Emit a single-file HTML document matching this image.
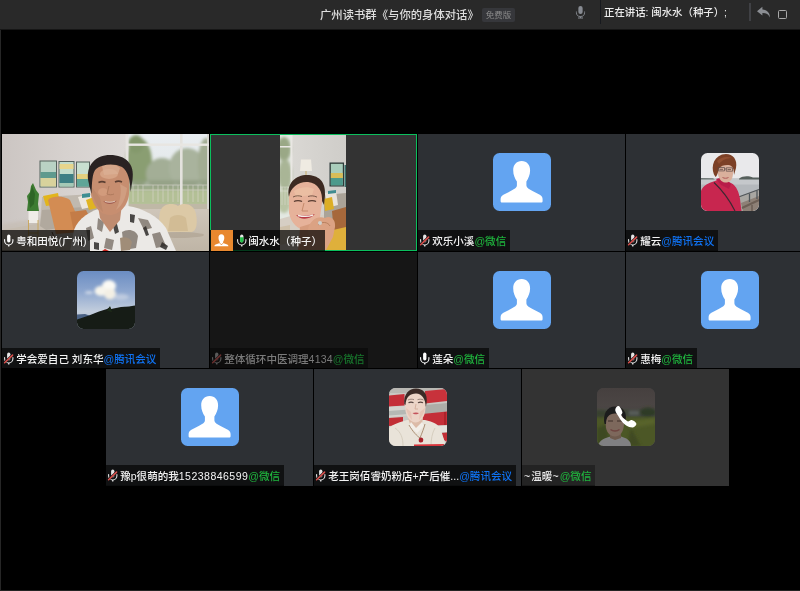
<!DOCTYPE html>
<html lang="zh-CN">
<head>
<meta charset="utf-8">
<title>腾讯会议</title>
<style>
*{box-sizing:border-box;margin:0;padding:0}
html,body{width:800px;height:591px;overflow:hidden;background:#000}
body{position:relative;font-family:"Liberation Sans","Noto Sans CJK SC",sans-serif;color:#fff}
#win{position:absolute;left:0;top:0;width:800px;height:591px;background:#000;overflow:hidden}
#hdr{position:absolute;left:0;top:0;width:800px;height:30px;background:#292929;border-bottom:1px solid #161616}
#lb{position:absolute;left:0;top:30px;width:1px;height:561px;background:#262626}
#bb{position:absolute;left:0;top:590px;width:800px;height:1px;background:#232323}
.title{position:absolute;left:320px;top:5.8px;height:18px;line-height:18px;font-size:11.35px;font-weight:500;color:#dedede;white-space:nowrap;will-change:transform}
.badge{position:absolute;left:482px;top:8px;width:33px;height:14px;line-height:14px;background:#36373b;color:#8c8c8c;font-size:8.5px;text-align:center;border-radius:2px;white-space:nowrap;will-change:transform}
.sep1{position:absolute;left:600px;top:0;width:1px;height:24px;background:#17191e}
.sep2{position:absolute;left:749px;top:3px;width:2px;height:18px;background:#404145}
.speak{position:absolute;left:604px;top:4.2px;height:18px;line-height:18px;font-size:10.4px;font-weight:500;color:#ececec;white-space:nowrap;will-change:transform}
.hmic{position:absolute;left:574.2px;top:5.2px}
.reply{position:absolute;left:756px;top:6px}
.maxb{position:absolute;left:778px;top:10px;width:9px;height:9px;border:1.2px solid #a9a9a9;border-radius:1.5px}
.tile{position:absolute;width:207px;height:117px;background:#2d3034;overflow:hidden}
.av{position:absolute;left:75px;top:19px;width:58px;height:58px;border-radius:6.5px;overflow:hidden;background:#63a4f1}
.av svg{display:block}
.lab{position:absolute;left:0;top:96px;height:21px;border-bottom:1px solid rgba(0,0,0,.25);line-height:20px;background:rgba(0,0,0,.64);font-size:10.55px;font-weight:500;white-space:nowrap;color:#f4f4f4;padding:1.2px 3.5px 0 14.2px;will-change:transform}
.lab .mic{position:absolute;left:0;top:3.7px}
.wx{color:#1fb63d}
.dg{letter-spacing:.45px}
.td{letter-spacing:1.1px}
.av.ph{background:#2d3034}
.tm{color:#0f72f2}
.photo{position:absolute;left:0;top:0;display:block}
#t11 .lab{background:rgba(0,0,0,.72)}
#t12{background:#333}
#t12 .bd{position:absolute;left:0;top:0;width:207px;height:117px;border:1px solid #0bbf5d}
#t12 .photo{left:70px;top:1px}
#t12 .lab{left:23px;top:96px;padding-left:15.2px;padding-right:3.4px;border-bottom:none;background:rgba(0,0,0,.7)}
#t12 .lab .mic{left:1.6px}
#t12 .host{position:absolute;left:0;top:96px;width:23px;height:21px;background:#e8882f;border-left:1px solid #0c1a10}
#t12 .host svg{display:block;margin-left:-1px}
#t22{background:#161616}
#t22 .lab{background:rgba(0,0,0,.4);color:#7a7a7a}
#t22 .wx{color:#17762c}
#t33{background:#333}
#t33 .lab{padding-left:2px;background:rgba(0,0,0,.3);color:#ececec}
#t33 .av{background:#444}
</style>
</head>
<body>
<div id="win">
  <div id="hdr">
    <div class="title">广州读书群《与你的身体对话》</div>
    <div class="badge">免费版</div>
    <svg class="hmic" width="13" height="14.9" viewBox="0 0 14 16"><rect x="4.7" y="1" width="4.6" height="8.8" rx="2.3" fill="#878b92"/><path d="M2.6 7v1a4.4 4.4 0 0 0 8.8 0v-1" fill="none" stroke="#878b92" stroke-width="1"/><path d="M7 12.4v1.4M4.3 13.9h5.4" stroke="#878b92" stroke-width="1.1" fill="none"/></svg>
    <div class="sep1"></div>
    <div class="speak">正在讲话: 闽水水（种子）;</div>
    <div class="sep2"></div>
    <svg class="reply" width="16" height="13" viewBox="0 0 16 13"><path fill="#8b8e93" d="M6.4 0.8L1 5.2L6.4 9.6V6.9C10.2 6.8 12.6 8.2 13.9 11.6C14.1 7.2 11.4 3.9 6.4 3.5Z"/></svg>
    <div class="maxb"></div>
  </div>
  <div id="lb"></div><div id="bb"></div>

  <!-- row 1 -->
  <div class="tile" id="t11" style="left:2px;top:134px"><svg class="photo" width="207" height="117" viewBox="0 0 207 117">
<defs>
<filter id="b1" x="-10%" y="-10%" width="120%" height="120%"><feGaussianBlur stdDeviation="0.7"/></filter>
<filter id="b2" x="-20%" y="-20%" width="140%" height="140%"><feGaussianBlur stdDeviation="1.8"/></filter>
<filter id="b3" x="-20%" y="-20%" width="140%" height="140%"><feGaussianBlur stdDeviation="3.5"/></filter>
<linearGradient id="wall1" x1="0" y1="0" x2="1" y2="0"><stop offset="0" stop-color="#cbc5c2"/><stop offset=".3" stop-color="#d6d1ce"/><stop offset=".6" stop-color="#dedad8"/><stop offset="1" stop-color="#e4e1df"/></linearGradient>
<linearGradient id="flr1" x1="0" y1="0" x2="0" y2="1"><stop offset="0" stop-color="#cfc6ba"/><stop offset="1" stop-color="#bfb5a6"/></linearGradient>
<linearGradient id="sky1" x1="0" y1="0" x2="0" y2="1"><stop offset="0" stop-color="#e9edf1"/><stop offset="1" stop-color="#dfe5e2"/></linearGradient>
</defs>
<rect width="207" height="117" fill="url(#wall1)"/>
<!-- floor -->
<path d="M0 96L124 74L207 74L207 117L0 117Z" fill="url(#flr1)"/>
<path d="M0 90L40 84L124 76L124 96L0 112Z" fill="#c4bbb0" opacity=".6" filter="url(#b2)"/>
<!-- window view -->
<rect x="125" y="0" width="82" height="75" fill="url(#sky1)"/>
<g filter="url(#b2)">
<ellipse cx="137" cy="28" rx="13" ry="24" fill="#8a9e72"/>
<ellipse cx="160" cy="40" rx="16" ry="16" fill="#a3ae96"/>
<ellipse cx="185" cy="34" rx="18" ry="20" fill="#a9b39d"/>
<ellipse cx="204" cy="30" rx="8" ry="26" fill="#a2ac93"/>
<ellipse cx="134" cy="10" rx="8" ry="9" fill="#84986c"/>
<rect x="125" y="52" width="82" height="20" fill="#b3c096"/>
<rect x="125" y="46" width="82" height="10" fill="#8f9c80" opacity=".7"/>
</g>
<g stroke="#ddd9d2" stroke-width=".7" opacity=".8"><path d="M128 51H207M128 56H207"/><path d="M131 51V68M136 51V68M141 51V68M151 51V68M156 51V68M161 51V68M166 51V68M171 51V68M176 51V68M186 51V68M191 51V68M196 51V68M201 51V68"/></g>
<rect x="125" y="70" width="82" height="5" fill="#bfb8a6"/>
<!-- window frames -->
<rect x="123.500" y="0" width="3" height="75" fill="#e6e3e0"/>
<rect x="178" y="0" width="2.600" height="72" fill="#e4e2de"/>
<rect x="205" y="0" width="2" height="75" fill="#d9d7d2"/>
<rect x="125" y="9.500" width="82" height="2.400" fill="#e8e6e2"/>
<!-- paintings -->
<g filter="url(#b1)">
<rect x="37.500" y="26.500" width="17.500" height="27" fill="#55625d"/>
<rect x="38.500" y="27.500" width="15.500" height="25" fill="#b9d2c4"/>
<rect x="38.500" y="38" width="15.500" height="6" fill="#5f9a8e"/>
<rect x="38.500" y="44" width="15.500" height="8.500" fill="#d8d29c"/>
<rect x="56.500" y="27" width="16" height="26.500" fill="#55625d"/>
<rect x="57.500" y="28" width="14" height="24.500" fill="#c2dccb"/>
<rect x="57.500" y="30" width="14" height="5" fill="#e6d58c"/>
<rect x="57.500" y="40" width="14" height="9" fill="#3d7f84"/>
<rect x="57.500" y="49" width="14" height="3.500" fill="#a5c9b6"/>
<rect x="74" y="27.500" width="14" height="26" fill="#55625d"/>
<rect x="75" y="28.500" width="12" height="24" fill="#c8dfd0"/>
<rect x="75" y="40" width="12" height="5" fill="#e3d07e"/>
<rect x="75" y="45" width="12" height="7.500" fill="#5fa597"/>
</g>
<!-- sofa -->
<g filter="url(#b1)">
<path d="M40 63L92 60L96 64L96 88L44 96L38 92Z" fill="#c0b9af"/>
<path d="M40 76L96 72L96 88L44 96L38 92Z" fill="#b1a99e"/>
<path d="M41 62L56 59L58 70L44 72Z" fill="#e2b51f"/>
<path d="M76 63L88 60L94 72L80 75Z" fill="#ece7de"/>
<path d="M84 66L92 63L95 74L87 76Z" fill="#e0b422"/>
<path d="M80 60L88 59L88 63L80 64Z" fill="#3d8e92"/>
<!-- orange chair -->
<path d="M46 66C52 61 62 62 68 66L76 84L78 98L54 100Z" fill="#d38c52"/>
<path d="M68 78L84 76L88 84L86 98L72 99Z" fill="#c47c46"/>
<path d="M50 98L54 108M80 96L82 104" stroke="#6b4a30" stroke-width="1"/>
</g>
<!-- plant -->
<g filter="url(#b1)">
<path d="M31 49L34 56L37 60L36 70L37 77L25 77L26 68L25 62L28 58L29 52Z" fill="#3e7b32"/>
<path d="M30 52L33 60L32 70L28 74L27 64Z" fill="#2d6526"/>
<rect x="26.500" y="77" width="9.500" height="12" fill="#efece8"/>
<path d="M26.500 86V104M36 86V104M26.500 99H36" stroke="#c9a556" stroke-width=".9" fill="none"/>
</g>
<!-- beanbag -->
<g filter="url(#b1)">
<path d="M158 78C160 70 170 68 176 72C182 68 192 70 194 80C196 90 194 97 190 98L162 98C157 96 156 86 158 78Z" fill="#dcc9a6"/>
<path d="M168 84C172 80 180 80 184 84L186 97L166 97Z" fill="#cdb68f" opacity=".7"/>
<ellipse cx="178" cy="101" rx="24" ry="3" fill="#a89c8a" opacity=".5"/>
</g>
<!-- person -->
<g filter="url(#b1)">
<!-- shirt -->
<path d="M68 117L72 96C76 84 90 76 100 74L126 72C140 74 156 82 164 94L174 117Z" fill="#ebe9e6"/>
<path d="M96 84l6 4-2 10-5-3zM84 94l5-2 3 12-6 3zM120 98c6-4 14-2 16 4l-2 12-12 2zM136 84l10 2 4 8-8 2zM150 100l8-2 6 14-10 2zM104 104l8 2-2 10-8-2zM76 104l4-3 2 9-5 2z" fill="#7a7068" opacity=".8"/>
<path d="M110 88l4-2 3 12-4 2zM128 80l5 1-1 8-4-1zM144 92l3 9-3 1-3-8zM92 108l5 1v7l-5-1zM160 108l6 4-2 4-6-3z" fill="#2e2a28" opacity=".85"/>
<path d="M118 104c5-2 10 0 12 4l-2 8-9 1z" fill="#a08d78"/>
<!-- neck -->
<path d="M96 72L120 70L118 86L108 98L98 84Z" fill="#c08c70"/>
<!-- face -->
<path d="M89 40C89 28 99 24 108 24C118 24 127 30 127.500 42L127 60C126 72 117 81 108 81C98 81 90.500 72 89 60Z" fill="#c78e70"/><ellipse cx="107" cy="40" rx="9" ry="5" fill="#e0b394" opacity=".6"/><ellipse cx="101" cy="58" rx="5" ry="4" fill="#d8a384" opacity=".6"/><path d="M89 52c1 10 5 20 12 26l-3-14z" fill="#b88468" opacity=".6"/><path d="M118 50c2 8 0 18-4 26 6-4 10-12 11-22z" fill="#d6a88c" opacity=".6"/>
<path d="M100 32c6-3 14-2 18 2l-2 6-14 1z" fill="#dcb096" opacity=".7"/>
<!-- hair -->
<path d="M86.500 48C83 31 94 21 108 21C124 21 133 30 130.500 46L128.500 58C128.500 47 126 37 120 33C112 29 100 30 94 35C90 39 90 49 89.500 60Z" fill="#2a2422"/>
<!-- features -->
<path d="M96.500 48.500c2-1 5-1 7 0M113 48c2-1 5-1 7 0" stroke="#3e2a22" stroke-width="1.500" fill="none" opacity=".8"/>
<path d="M101 67c4 2 10 2 14-.5-3 4-10 5-14 .5z" fill="#9a544a" opacity=".85"/><path d="M103 67.500c3 1 7 1 10-.3" stroke="#e8dcd4" stroke-width=".9" fill="none" opacity=".8"/>
<path d="M107 52l-2 8c2 1 5 1 7 0" stroke="#a87458" stroke-width="1" fill="none" opacity=".8"/>
<path d="M100 117l3-2 4 2z" fill="#c8231e"/>
</g>
</svg><div class="lab"><svg class="mic" width="13" height="14" viewBox="0 0 13 14"><rect x="5.1" y="0.6" width="3.3" height="7.8" rx="1.65" fill="#ffffff"/><path d="M2.6 5.6v1.2a4.15 4.15 0 0 0 8.3 0v-1.2" fill="none" stroke="#ffffff" stroke-width="1.1" stroke-linecap="round"/><path d="M6.75 10.9v1.5" stroke="#ffffff" stroke-width="1.3"/></svg>粤和田悦(广州)</div></div>
  <div class="tile" id="t12" style="left:210px;top:134px"><svg class="photo" width="66" height="115" viewBox="0 0 66 115">
<defs>
<filter id="c1" x="-10%" y="-10%" width="120%" height="120%"><feGaussianBlur stdDeviation="0.7"/></filter>
<filter id="c2" x="-20%" y="-20%" width="140%" height="140%"><feGaussianBlur stdDeviation="1.6"/></filter>
<linearGradient id="wall2" x1="0" y1="0" x2="1" y2="0"><stop offset="0" stop-color="#dcdad6"/><stop offset="1" stop-color="#cfcdc9"/></linearGradient>
</defs>
<rect width="66" height="115" fill="url(#wall2)"/>
<!-- window left -->
<rect x="0" y="0" width="12" height="84" fill="#e3e8e2"/>
<g filter="url(#c2)">
<ellipse cx="4" cy="14" rx="7" ry="12" fill="#9aa886"/>
<ellipse cx="5" cy="40" rx="7" ry="16" fill="#a9b596"/>
<ellipse cx="4" cy="66" rx="7" ry="12" fill="#b9c4a4"/>
</g>
<rect x="10.500" y="0" width="2" height="86" fill="#e9e7e3"/>
<rect x="0" y="11" width="11" height="1.500" fill="#e9e7e3"/>
<path d="M0 52H10M0 56H10M2 52V70M5 52V70M8 52V70" stroke="#e2e0d8" stroke-width=".6" opacity=".8"/>
<!-- floor -->
<path d="M0 84L14 80L66 80L66 115L0 115Z" fill="#d6cec4"/>
<path d="M0 92L10 90L10 108L0 110Z" fill="#c9b79a" opacity=".6" filter="url(#c1)"/>
<!-- lamp -->
<g filter="url(#c1)">
<path d="M21 24.500L31 24.500L32 36L20 36Z" fill="#efebe2"/>
<path d="M26 36V46" stroke="#c9ab62" stroke-width="1"/>
</g>
<!-- painting -->
<g filter="url(#c1)">
<rect x="49.500" y="27.500" width="14.500" height="24" fill="#2f3a38"/>
<rect x="50.800" y="28.800" width="12" height="21.500" fill="#a9cdbb"/>
<rect x="50.800" y="38" width="12" height="5" fill="#d8bd58"/>
<rect x="50.800" y="43" width="12" height="7.300" fill="#4e9a8c"/>
<rect x="64.500" y="30" width="1.500" height="22" fill="#39706c"/>
</g>
<!-- sofa right -->
<g filter="url(#c1)">
<path d="M44 60L66 58L66 84L44 86Z" fill="#aaa398"/>
<path d="M45 58L56 56L58 70L47 73Z" fill="#e8e3da"/>
<path d="M44 64L52 62L54 74L45 76Z" fill="#dcae25"/>
<path d="M48 56L56 55L56 58L48 59Z" fill="#3f8c90"/>
<path d="M52 76L66 72L66 100L54 100Z" fill="#a6673a"/>
</g>
<!-- person -->
<g filter="url(#c1)">
<path d="M40 98L66 92L66 115L36 115Z" fill="#dfb03a"/>
<!-- hair -->
<path d="M9 62C6 48 16 40 27 40C38 40 46 46 45 60L44 70L40 62C36 52 22 50 14 56Z" fill="#3e2c22"/>
<!-- face -->
<path d="M9 62C10 52 20 46 28 47C38 48 43 56 42 68L40 82C38 90 32 95 26 95C18 95 11 88 9 78Z" fill="#e6b29a"/>
<path d="M14 56c5-4 14-5 20-2l-2 6-16 2z" fill="#ecc0a4" opacity=".8"/>
<path d="M14 66.500c2-1.200 6-1.200 8 0M28 66.500c2-1.200 6-1.200 8 0" stroke="#3e261e" stroke-width="1.400" fill="none" opacity=".85"/><path d="M13 62c3-1.500 6-1.500 9-.5M28 61.500c3-1 6-.8 9 .6" stroke="#4a3226" stroke-width="1" fill="none" opacity=".7"/>
<path d="M16 80c4 5 14 5 19-1-5 1.500-13 2-19 1z" fill="#b83a44"/>
<path d="M18 80.500c5 1.200 11 1 15-.4" stroke="#f4eeea" stroke-width="1.300" fill="none"/>
<path d="M24 68l-2 8h6" stroke="#c58a6c" stroke-width="1" fill="none"/>
<!-- neck -->
<path d="M20 92L40 86L44 115L18 115Z" fill="#d69c7e"/>
<!-- hand -->
<path d="M28 94C30 85 38 80 45 83C50 80 56 84 55 92L53 102L46 115L30 115Z" fill="#dba283"/>
<path d="M38 90c4-4 10-3 12 1" stroke="#b8805f" stroke-width="1" fill="none"/>
<circle cx="40" cy="88" r="2" fill="#cfd0cc"/>
</g>
</svg><div class="bd"></div><div class="host"><svg width="23" height="21" viewBox="0 0 23 21"><path fill="#fff" d="M11.4 4.2c1.9 0 2.9 1.5 2.9 3.5 0 1.7-.6 3-1.2 4v1.3l4 1.4c.9.3 1.3.9 1.3 1.8H4.4c0-.9.4-1.5 1.3-1.8l4-1.4v-1.3c-.6-1-1.2-2.3-1.2-4 0-2 1-3.5 2.9-3.5z"/><path d="M9.8 13.2l1.6 1.6 1.6-1.6" fill="none" stroke="#e8882f" stroke-width=".9"/></svg></div><div class="lab"><svg class="mic" width="13" height="14" viewBox="0 0 13 14"><rect x="5.1" y="0.6" width="3.3" height="7.8" rx="1.65" fill="#e8e8e8"/><path d="M5.1 3.2h3.3v3.55a1.65 1.65 0 0 1-3.3 0z" fill="#22c24a"/><path d="M2.6 5.6v1.2a4.15 4.15 0 0 0 8.3 0v-1.2" fill="none" stroke="#e8e8e8" stroke-width="1.1" stroke-linecap="round"/><path d="M6.75 10.9v1.5" stroke="#e8e8e8" stroke-width="1.3"/></svg>闽水水（种子）</div></div>
  <div class="tile" id="t13" style="left:418px;top:134px"><div class="av"><svg width="58" height="58" viewBox="0 0 58 58"><path fill="#fff" d="M28.7 8C34 8 37.1 12 37.1 17.2C37.1 22 35.2 25.6 33.4 28.6L33.4 32.6C33.4 34.8 36 36.3 40 38.3L46.8 41.8C48.9 42.9 49.6 44.4 49.6 46.4L49.6 48C49.6 49 49.1 49.5 48.1 49.5L9.1 49.5C8.1 49.5 7.6 49 7.6 48L7.6 46.4C7.6 44.4 8.3 42.9 10.4 41.8L17.2 38.3C21.2 36.3 23.9 34.8 23.9 32.6L23.9 28.6C22 25.6 20.2 22 20.2 17.2C20.2 12 23.3 8 28.7 8Z"/></svg></div><div class="lab"><svg class="mic" width="13" height="14" viewBox="0 0 13 14"><rect x="5.1" y="0.6" width="3.3" height="7.8" rx="1.65" fill="#e4e4e4"/><path d="M2.6 5.6v1.2a4.15 4.15 0 0 0 8.3 0v-1.2" fill="none" stroke="#e4e4e4" stroke-width="1.1" stroke-linecap="round"/><path d="M6.75 10.9v1.5" stroke="#e4e4e4" stroke-width="1.3"/><path d="M2.6 10.7L10.7 2.9" stroke="#111" stroke-width="2.3" stroke-linecap="butt"/><path d="M2.6 10.8L10.6 3.1" stroke="#dd514e" stroke-width="1.5" stroke-linecap="round"/></svg>欢乐小溪<span class="wx">@微信</span></div></div>
  <div class="tile" id="t14" style="left:626px;top:134px"><div class="av ph"><svg width="58" height="58" viewBox="0 0 58 58">
<defs><filter id="d1" x="-10%" y="-10%" width="120%" height="120%"><feGaussianBlur stdDeviation="0.6"/></filter></defs>
<rect width="58" height="58" fill="#e9e9eb"/>
<rect y="25.500" width="58" height="33" fill="#b4b8bc"/>
<rect y="25.500" width="58" height="6" fill="#c5c8cb"/>
<g filter="url(#d1)">
<path d="M38 25.800C42 22.500 48 23 52 24.600L58 24.400L58 26.400L38 26.400Z" fill="#56605c"/>
<path d="M0 25L12 25.200L14 26.400L0 26.400Z" fill="#6d7674"/>
<!-- boardwalk / railing -->
<path d="M36 44L58 36L58 58L40 58Z" fill="#a9a7a2"/>
<path d="M40 50L58 43L58 58L42 58Z" fill="#8d8076"/>
<path d="M37.500 44L58 36.500" stroke="#50565a" stroke-width="1.100"/>
<path d="M48.500 40.500V49M56 37.500V46" stroke="#50565a" stroke-width="1.300"/>
<path d="M41 55L58 47" stroke="#6d5f55" stroke-width="2"/>
<path d="M51 52V58" stroke="#6d5f55" stroke-width="1.600"/>
<!-- jacket -->
<path d="M0 38C2 32 8 30 14 28L20 25L30 30C36 33 38 40 39 46L40.500 58L0 58Z" fill="#c8254f"/>
<path d="M15 26L22 24L30 31L28 36L20 32Z" fill="#b81f48"/>
<path d="M13 29.500C20 36 28 46 34 58" stroke="#3a2a30" stroke-width="1.100" fill="none"/>
<!-- face -->
<path d="M16.500 16C16.500 11 21 9 25 9.500C30 10 32.500 13 32.500 18L31.500 24C30.500 28 27 30 24 29.500C20 29 17.500 25 17 21Z" fill="#dab09c"/>
<!-- hair -->
<path d="M14.500 24C9.500 17 11 5 21 1.500C30 -1 37 5 35 15L33 22C33 16 32 13 28 12C24 11.500 20 12.500 18 15.500C17 18 17 22 14.500 24Z" fill="#7c4126"/><path d="M16 8c4-4 10-5 15-3-5 0-10 2-13 6z" fill="#9a5634" opacity=".7"/>
<path d="M17.300 14.500h6.200v3.400h-6.200zM25.300 14.800h6.200v3.400h-6.200zM23.500 16h1.800" stroke="#5a4a48" stroke-width=".7" fill="none"/><path d="M18.500 16.300h3.500M26.500 16.600h3.500" stroke="#4a3a36" stroke-width=".9" opacity=".8"/>
<path d="M21.500 24.500c2 1 4 1 6 0" stroke="#b05a58" stroke-width="1" fill="none"/>
</g>
</svg></div><div class="lab"><svg class="mic" width="13" height="14" viewBox="0 0 13 14"><rect x="5.1" y="0.6" width="3.3" height="7.8" rx="1.65" fill="#e4e4e4"/><path d="M2.6 5.6v1.2a4.15 4.15 0 0 0 8.3 0v-1.2" fill="none" stroke="#e4e4e4" stroke-width="1.1" stroke-linecap="round"/><path d="M6.75 10.9v1.5" stroke="#e4e4e4" stroke-width="1.3"/><path d="M2.6 10.7L10.7 2.9" stroke="#111" stroke-width="2.3" stroke-linecap="butt"/><path d="M2.6 10.8L10.6 3.1" stroke="#dd514e" stroke-width="1.5" stroke-linecap="round"/></svg>耀云<span class="tm">@腾讯会议</span></div></div>
  <!-- row 2 -->
  <div class="tile" id="t21" style="left:2px;top:252px;height:116px"><div class="av ph"><svg width="58" height="58" viewBox="0 0 58 58">
<defs><filter id="e1" x="-20%" y="-20%" width="140%" height="140%"><feGaussianBlur stdDeviation="1.400"/></filter>
<filter id="e2" x="-10%" y="-10%" width="120%" height="120%"><feGaussianBlur stdDeviation="0.600"/></filter>
<linearGradient id="sky2" x1="0" y1="0" x2="0" y2="1"><stop offset="0" stop-color="#6b8dc2"/><stop offset=".35" stop-color="#8ea7cf"/><stop offset=".7" stop-color="#c3cedd"/><stop offset="1" stop-color="#aab6c8"/></linearGradient></defs>
<rect width="58" height="58" fill="url(#sky2)"/>
<g filter="url(#e1)">
<ellipse cx="32" cy="15" rx="7" ry="6" fill="#fbfaf5"/>
<ellipse cx="24" cy="20" rx="6.500" ry="5" fill="#f6f4ec"/>
<ellipse cx="33" cy="23" rx="6" ry="5.500" fill="#f3efe4"/>
<ellipse cx="12" cy="21.500" rx="4" ry="1.500" fill="#dfe5ee" opacity=".8"/>
<ellipse cx="44" cy="26" rx="8" ry="3" fill="#d4dbe8" opacity=".6"/>
</g>
<g filter="url(#e2)">
<path d="M0 43.500L8 43L14 45L0 49Z" fill="#4c6285"/>
<path d="M0 48.500L12 44.500L22 40.500L30 38L33 36L34 38L44 36L52 35.500L58 34.500L58 58L0 58Z" fill="#141a16"/>
<path d="M30 40l3-5 2 6z" fill="#1f2b1a"/>
</g>
</svg></div><div class="lab"><svg class="mic" width="13" height="14" viewBox="0 0 13 14"><rect x="5.1" y="0.6" width="3.3" height="7.8" rx="1.65" fill="#e4e4e4"/><path d="M2.6 5.6v1.2a4.15 4.15 0 0 0 8.3 0v-1.2" fill="none" stroke="#e4e4e4" stroke-width="1.1" stroke-linecap="round"/><path d="M6.75 10.9v1.5" stroke="#e4e4e4" stroke-width="1.3"/><path d="M2.6 10.7L10.7 2.9" stroke="#111" stroke-width="2.3" stroke-linecap="butt"/><path d="M2.6 10.8L10.6 3.1" stroke="#dd514e" stroke-width="1.5" stroke-linecap="round"/></svg>学会爱自己 刘东华<span class="tm">@腾讯会议</span></div></div>
  <div class="tile" id="t22" style="left:210px;top:252px;height:116px"><div class="lab"><svg class="mic" width="13" height="14" viewBox="0 0 13 14"><rect x="5.1" y="0.6" width="3.3" height="7.8" rx="1.65" fill="#5a5a5a"/><path d="M2.6 5.6v1.2a4.15 4.15 0 0 0 8.3 0v-1.2" fill="none" stroke="#5a5a5a" stroke-width="1.1" stroke-linecap="round"/><path d="M6.75 10.9v1.5" stroke="#5a5a5a" stroke-width="1.3"/><path d="M2.6 10.7L10.7 2.9" stroke="#111" stroke-width="2.3" stroke-linecap="butt"/><path d="M2.6 10.8L10.6 3.1" stroke="#6a2f2e" stroke-width="1.5" stroke-linecap="round"/></svg>整体循环中医调理<span class="dg" style="letter-spacing:.2px">4134</span><span class="wx">@微信</span></div></div>
  <div class="tile" id="t23" style="left:418px;top:252px;height:116px"><div class="av"><svg width="58" height="58" viewBox="0 0 58 58"><path fill="#fff" d="M28.7 8C34 8 37.1 12 37.1 17.2C37.1 22 35.2 25.6 33.4 28.6L33.4 32.6C33.4 34.8 36 36.3 40 38.3L46.8 41.8C48.9 42.9 49.6 44.4 49.6 46.4L49.6 48C49.6 49 49.1 49.5 48.1 49.5L9.1 49.5C8.1 49.5 7.6 49 7.6 48L7.6 46.4C7.6 44.4 8.3 42.9 10.4 41.8L17.2 38.3C21.2 36.3 23.9 34.8 23.9 32.6L23.9 28.6C22 25.6 20.2 22 20.2 17.2C20.2 12 23.3 8 28.7 8Z"/></svg></div><div class="lab"><svg class="mic" width="13" height="14" viewBox="0 0 13 14"><rect x="5.1" y="0.6" width="3.3" height="7.8" rx="1.65" fill="#ffffff"/><path d="M2.6 5.6v1.2a4.15 4.15 0 0 0 8.3 0v-1.2" fill="none" stroke="#ffffff" stroke-width="1.1" stroke-linecap="round"/><path d="M6.75 10.9v1.5" stroke="#ffffff" stroke-width="1.3"/></svg>莲朵<span class="wx">@微信</span></div></div>
  <div class="tile" id="t24" style="left:626px;top:252px;height:116px"><div class="av"><svg width="58" height="58" viewBox="0 0 58 58"><path fill="#fff" d="M28.7 8C34 8 37.1 12 37.1 17.2C37.1 22 35.2 25.6 33.4 28.6L33.4 32.6C33.4 34.8 36 36.3 40 38.3L46.8 41.8C48.9 42.9 49.6 44.4 49.6 46.4L49.6 48C49.6 49 49.1 49.5 48.1 49.5L9.1 49.5C8.1 49.5 7.6 49 7.6 48L7.6 46.4C7.6 44.4 8.3 42.9 10.4 41.8L17.2 38.3C21.2 36.3 23.9 34.8 23.9 32.6L23.9 28.6C22 25.6 20.2 22 20.2 17.2C20.2 12 23.3 8 28.7 8Z"/></svg></div><div class="lab"><svg class="mic" width="13" height="14" viewBox="0 0 13 14"><rect x="5.1" y="0.6" width="3.3" height="7.8" rx="1.65" fill="#e4e4e4"/><path d="M2.6 5.6v1.2a4.15 4.15 0 0 0 8.3 0v-1.2" fill="none" stroke="#e4e4e4" stroke-width="1.1" stroke-linecap="round"/><path d="M6.75 10.9v1.5" stroke="#e4e4e4" stroke-width="1.3"/><path d="M2.6 10.7L10.7 2.9" stroke="#111" stroke-width="2.3" stroke-linecap="butt"/><path d="M2.6 10.8L10.6 3.1" stroke="#dd514e" stroke-width="1.5" stroke-linecap="round"/></svg>惠梅<span class="wx">@微信</span></div></div>
  <!-- row 3 -->
  <div class="tile" id="t31" style="left:106px;top:369px"><div class="av"><svg width="58" height="58" viewBox="0 0 58 58"><path fill="#fff" d="M28.7 8C34 8 37.1 12 37.1 17.2C37.1 22 35.2 25.6 33.4 28.6L33.4 32.6C33.4 34.8 36 36.3 40 38.3L46.8 41.8C48.9 42.9 49.6 44.4 49.6 46.4L49.6 48C49.6 49 49.1 49.5 48.1 49.5L9.1 49.5C8.1 49.5 7.6 49 7.6 48L7.6 46.4C7.6 44.4 8.3 42.9 10.4 41.8L17.2 38.3C21.2 36.3 23.9 34.8 23.9 32.6L23.9 28.6C22 25.6 20.2 22 20.2 17.2C20.2 12 23.3 8 28.7 8Z"/></svg></div><div class="lab"><svg class="mic" width="13" height="14" viewBox="0 0 13 14"><rect x="5.1" y="0.6" width="3.3" height="7.8" rx="1.65" fill="#e4e4e4"/><path d="M2.6 5.6v1.2a4.15 4.15 0 0 0 8.3 0v-1.2" fill="none" stroke="#e4e4e4" stroke-width="1.1" stroke-linecap="round"/><path d="M6.75 10.9v1.5" stroke="#e4e4e4" stroke-width="1.3"/><path d="M2.6 10.7L10.7 2.9" stroke="#111" stroke-width="2.3" stroke-linecap="butt"/><path d="M2.6 10.8L10.6 3.1" stroke="#dd514e" stroke-width="1.5" stroke-linecap="round"/></svg>豫p很萌的我<span class="dg">15238846599</span><span class="wx">@微信</span></div></div>
  <div class="tile" id="t32" style="left:314px;top:369px"><div class="av ph"><svg width="58" height="58" viewBox="0 0 58 58">
<defs><filter id="f1" x="-10%" y="-10%" width="120%" height="120%"><feGaussianBlur stdDeviation="0.650"/></filter></defs>
<rect width="58" height="58" fill="#c9c8c3"/>
<g filter="url(#f1)">
<rect x="0" y="0" width="58" height="5" fill="#b9b8b3"/>
<path d="M0 7.500L15.500 6L15.500 17.500L0 18.500Z" fill="#c42f38"/>
<path d="M36 3L58 1L58 13L36 15.500Z" fill="#c8323a"/>
<path d="M0 19L58 15L58 24L0 29Z" fill="#d4d3ce"/><path d="M34 17L58 15L58 24L34 26.500Z" fill="#aeada8"/>
<path d="M0 23L20 21.500L20 26L0 27.500Z" fill="#b5b8b4"/>
<path d="M0 30L14 29L14 37L0 38Z" fill="#c22d36"/>
<path d="M33 26L58 23.500L58 37L34 38Z" fill="#c42f38"/>
<path d="M56 24V37" stroke="#a01c24" stroke-width="1.200"/>
<path d="M44 38L58 37.500L58 44L50 44Z" fill="#e2e1dc"/>
<path d="M52 45L58 44.500L58 54L55 52Z" fill="#c22d36"/>
<!-- sweater -->
<path d="M0 40C4 36 12 34 18 32L36 32C44 34 50 36 52 42L57 58L0 58Z" fill="#e9e3d9"/>
<path d="M6 40c6 4 8 10 8 18M46 40c-3 5-4 12-4 18" stroke="#d6cebf" stroke-width="1" fill="none"/>
<!-- neck -->
<path d="M19 30L34 30L33 36L27 41L21 36Z" fill="#dcbba8"/>
<path d="M22 34L27 40L33 34L35 38L28 45L20 38Z" fill="#f2eee8"/>
<!-- face -->
<path d="M16 14C16.500 6.500 22 3 27 3C32 3 37.500 7 37 15L36 24C35 30 30.500 34.500 26.500 34.500C22 34.500 17.500 29.500 16.500 23Z" fill="#ecd4c7"/><path d="M17 20c1 5 3 9 6 12l-1-8zM36 20c-1 5-3 9-6 12l1-8z" fill="#e2b9aa" opacity=".6"/>
<!-- hair -->
<path d="M15.300 16C14.500 6 20 0.500 27 0.500C34 0.500 39 5.500 37.600 15L36.800 19C36.500 11 33 5.800 27 5.500C21 5.500 17 9 16.500 17Z" fill="#3a2b27"/>
<path d="M19.500 14.800c1.500-.9 3.500-.9 5 0M29 14.800c1.500-.9 3.500-.9 5 0" stroke="#3e2e2a" stroke-width="1.200" fill="none" opacity=".85"/><path d="M19 12c2-1 4-1 6-.3M28.500 11.700c2-.7 4-.7 6 .3" stroke="#5a4640" stroke-width=".8" fill="none" opacity=".7"/>
<path d="M23.500 25c2-.8 5-.8 6.500 0-1.500 1.800-5 1.800-6.500 0z" fill="#c4525c"/>
<path d="M27 16l-1 5h3" stroke="#d0a896" stroke-width=".8" fill="none"/>
<!-- necklace -->
<path d="M20 37C24 44 28 48 31 50C33 45 35 40 36 36" stroke="#9a7a5a" stroke-width=".8" fill="none"/>
<ellipse cx="32" cy="52" rx="2.300" ry="2.600" fill="#a8202a"/>
<path d="M25 56.500L55 56L55 58L25 58Z" fill="#d8363c"/>
</g>
</svg></div><div class="lab"><svg class="mic" width="13" height="14" viewBox="0 0 13 14"><rect x="5.1" y="0.6" width="3.3" height="7.8" rx="1.65" fill="#e4e4e4"/><path d="M2.6 5.6v1.2a4.15 4.15 0 0 0 8.3 0v-1.2" fill="none" stroke="#e4e4e4" stroke-width="1.1" stroke-linecap="round"/><path d="M6.75 10.9v1.5" stroke="#e4e4e4" stroke-width="1.3"/><path d="M2.6 10.7L10.7 2.9" stroke="#111" stroke-width="2.3" stroke-linecap="butt"/><path d="M2.6 10.8L10.6 3.1" stroke="#dd514e" stroke-width="1.5" stroke-linecap="round"/></svg>老王岗佰睿奶粉店+产后催...<span class="tm">@腾讯会议</span></div></div>
  <div class="tile" id="t33" style="left:522px;top:369px"><div class="av ph"><svg width="58" height="58" viewBox="0 0 58 58">
<defs><filter id="g1" x="-10%" y="-10%" width="120%" height="120%"><feGaussianBlur stdDeviation="0.700"/></filter>
<filter id="g2" x="-20%" y="-20%" width="140%" height="140%"><feGaussianBlur stdDeviation="1.600"/></filter>
<linearGradient id="sky3" x1="0" y1="0" x2="0" y2="1"><stop offset="0" stop-color="#46403f"/><stop offset=".6" stop-color="#504b49"/><stop offset="1" stop-color="#5b5755"/></linearGradient></defs>
<rect width="58" height="58" fill="url(#sky3)"/>
<rect y="28" width="58" height="30" fill="#4c5726"/>
<g filter="url(#g2)">
<rect x="-2" y="21.500" width="62" height="7.500" fill="#3c4538"/>
<ellipse cx="51" cy="24" rx="8" ry="4.500" fill="#2f3b26"/>
<ellipse cx="4" cy="26" rx="6" ry="3.500" fill="#37412f"/>
<rect x="32" y="23" width="10" height="4" fill="#5a5e5c"/>
<path d="M30 34L58 30L58 36L34 40Z" fill="#59642c"/>
<path d="M0 40L10 36L12 56L0 58Z" fill="#3e4a20"/>
<path d="M30 58L34 40L44 58Z" fill="#3f4a20"/>
</g>
<g filter="url(#g1)">
<path d="M1 58C2 52 8 50 14 48.500L24 48.500C30 50 34 53 34 58Z" fill="#808082"/>
<path d="M13 44L24 44L24 50L18 52L13 50Z" fill="#6e5a4e"/>
<path d="M8.500 32C8.500 26 13 23 18 23C24 23 28 27 27.500 33L26.500 40C25.500 45 22 48.500 18 48.500C14 48.500 10 45 9 40Z" fill="#7d675b"/>
<path d="M7.500 36C5.500 26 10 18.500 18 18.500C26 18.500 30.500 24 28.500 33L27.500 36C27.500 30 25 25.500 18 25.500C12 25.500 9 29 9 36Z" fill="#1f1c1b"/>
<path d="M11 33H16M20 33H25" stroke="#3e302a" stroke-width="1"/>
<path d="M13.500 41.500c2.500 2 6.500 2 9 0" stroke="#6e4440" stroke-width="1.300" fill="none"/>
</g>
<path fill="#fff" d="M21.600 18.100C22.800 18.400 25.200 22.600 25.400 24.200C25.500 25.300 24.600 26 24.200 26.900C24.600 28.400 26 29.800 27.200 30.800C28.400 31.800 29.800 33 31 33.500C32.200 33.400 33.200 32.100 34.300 32C36 32 39.200 34.400 39.400 35.800C39.500 37.200 37.400 39.300 35.800 39.400C33.600 39.500 31 38.600 29.200 37.400C26.600 35.600 24.200 33 22.600 30.200C21 27.400 18.600 24.600 18.300 22.600C18.100 20.800 19.600 18 21.600 18.100Z"/>
</svg></div><div class="lab"><span class="td">~</span>温暖<span class="td">~</span><span class="wx">@微信</span></div></div>
</div>
</body>
</html>
